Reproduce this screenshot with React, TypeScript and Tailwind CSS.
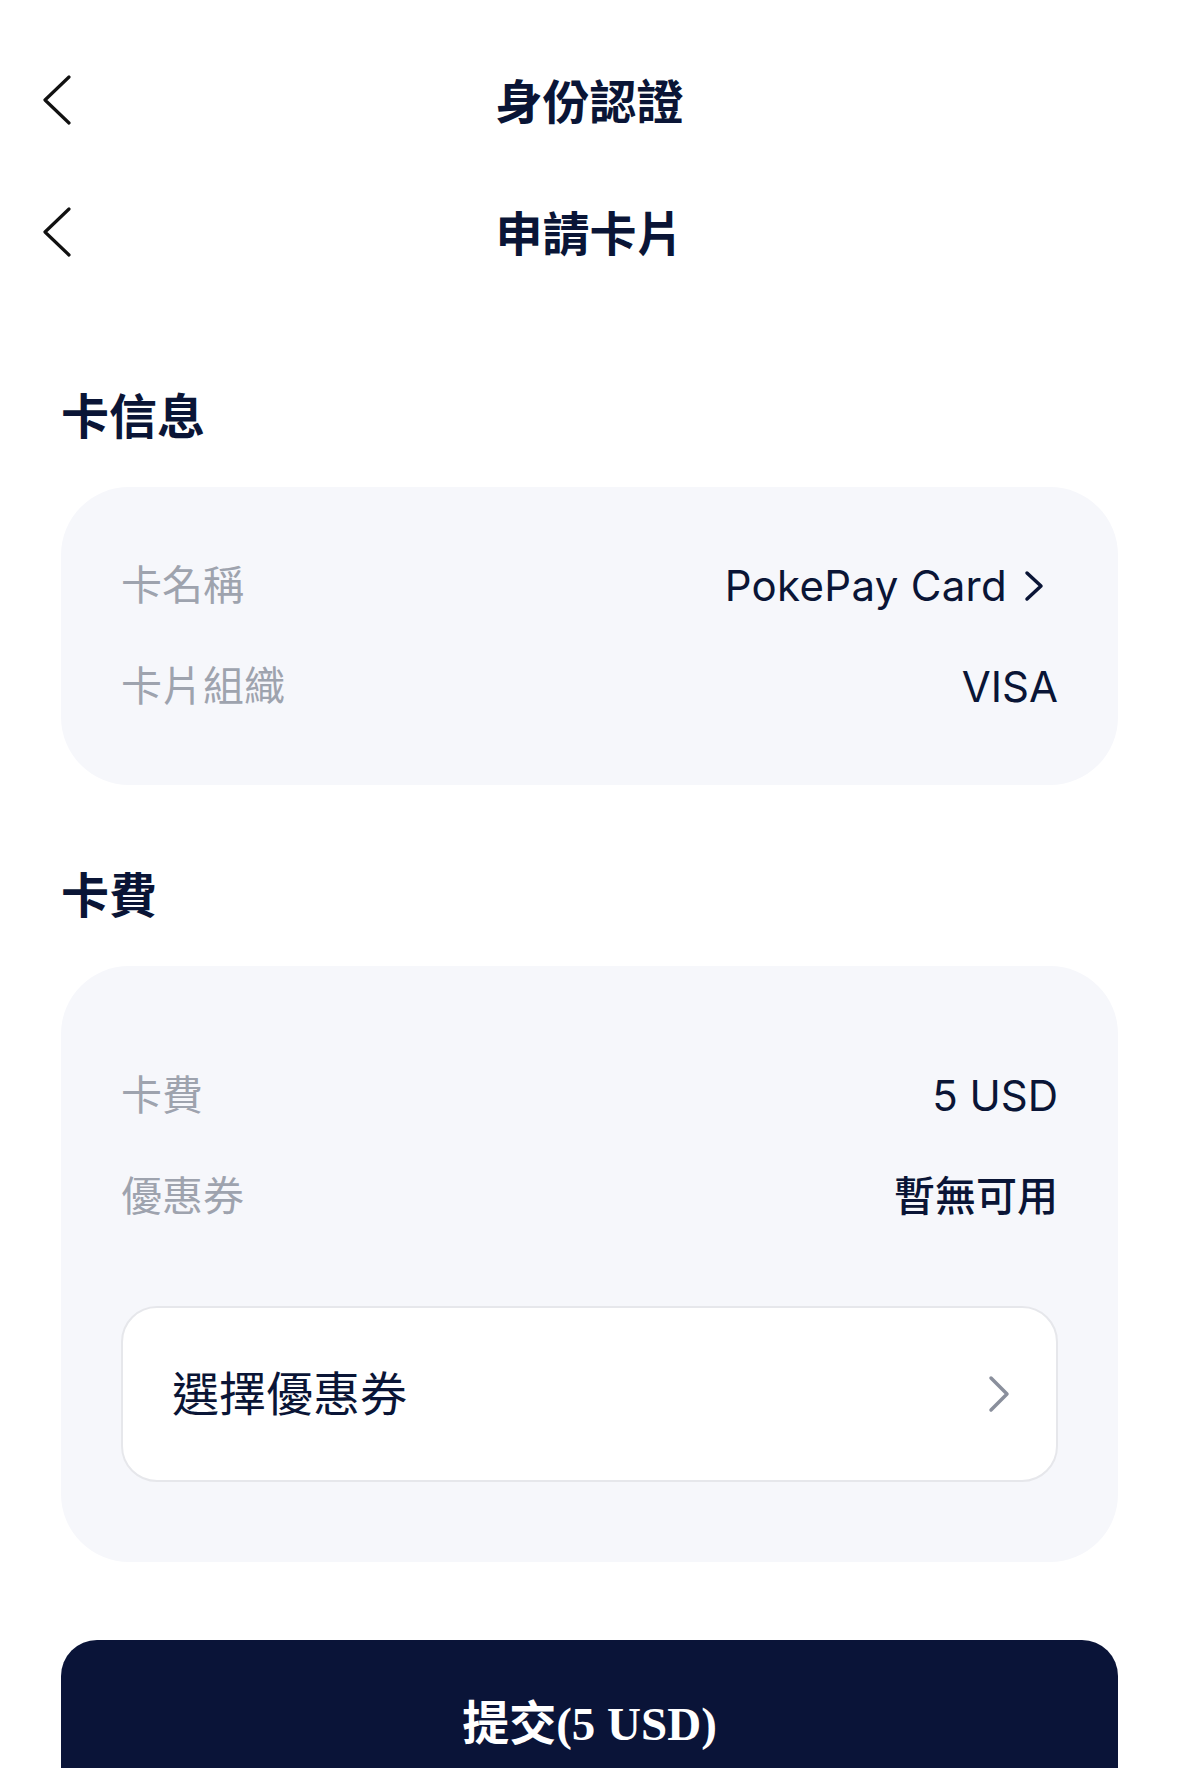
const sans = "font-['Inter','Noto_Sans_CJK_TC',sans-serif]";

function BackChevron() {
    return (
        <svg width="30" height="50" viewBox="0 0 30 50" fill="none" className="shrink-0">
            <path d="M27 2 L3 25 L27 48" stroke="#111111" strokeWidth="3.2" strokeLinecap="round" strokeLinejoin="round" />
        </svg>
    );
}

function SmallChevron({ color, w, h }: { color: string; w: number; h: number }) {
    return (
        <svg width={w} height={h} viewBox={`0 0 ${w} ${h}`} fill="none" className="shrink-0">
            <path d={`M3 3 L${w - 3} ${h / 2} L3 ${h - 3}`} stroke={color} strokeWidth="3.5" strokeLinecap="round" strokeLinejoin="round" />
        </svg>
    );
}

function NavBar({ title }: { title: string }) {
    return (
        <div className="relative flex h-[132px] items-center px-[42px]">
            <BackChevron />
            <h1 className="absolute inset-x-0 top-[4px] bottom-0 flex items-center justify-center text-[47px] font-bold text-[#0a1536]">
                {title}
            </h1>
        </div>
    );
}

function InfoRow({ label, children }: { label: string; children: React.ReactNode }) {
    return (
        <div className="flex h-[101px] items-center justify-between">
            <span className="text-[41px] text-[#9ea3ae]">{label}</span>
            {children}
        </div>
    );
}

export default function App() {
    return (
        <div className={`${sans} h-[1768px] w-full overflow-hidden bg-white`}>
            <div className="pt-[34px]">
                <NavBar title="身份認證" />
                <NavBar title="申請卡片" />
            </div>

            <div className="px-[61px]">
                {/* 卡信息 */}
                <h2 className="mt-[89px] h-[60px] text-[48px] font-bold leading-[60px] text-[#0a1536]">卡信息</h2>
                <div className="mt-[40px] rounded-[68px] bg-[#f6f7fb] px-[60px] py-[48px]">
                    <InfoRow label="卡名稱">
                        <span className="flex items-center gap-[17px] pr-[14px] text-[42px] tracking-[0.3px] text-[#0a1536]">
                            PokePay Card
                            <SmallChevron color="#0a1536" w={20} h={32} />
                        </span>
                    </InfoRow>
                    <InfoRow label="卡片組織">
                        <span className="text-[42px] text-[#0a1536]">VISA</span>
                    </InfoRow>
                </div>

                {/* 卡費 */}
                <h2 className="mt-[81px] h-[60px] text-[48px] font-bold leading-[60px] text-[#0a1536]">卡費</h2>
                <div className="mt-[40px] rounded-[68px] bg-[#f6f7fb] px-[60px] pt-[79px] pb-[80px]">
                    <InfoRow label="卡費">
                        <span className="text-[42px] text-[#0a1536]">5 USD</span>
                    </InfoRow>
                    <InfoRow label="優惠券">
                        <span className="text-[41px] font-medium text-[#0a1536]">暫無可用</span>
                    </InfoRow>
                    <button className="mt-[59px] flex h-[176px] w-full items-center justify-between rounded-[36px] border-2 border-[#e6e7eb] bg-white pr-[46px] pl-[49px]">
                        <span className="text-[47px] text-[#0a1536]">選擇優惠券</span>
                        <SmallChevron color="#8a8f9c" w={22} h={38} />
                    </button>
                </div>

                <button className="mt-[78px] flex h-[168px] w-full items-center justify-center rounded-[36px] bg-[#0a1438] font-['Liberation_Serif','Noto_Sans_CJK_TC',serif] text-[47px] font-bold text-white">
                    提交(5 USD)
                </button>
            </div>
        </div>
    );
}
